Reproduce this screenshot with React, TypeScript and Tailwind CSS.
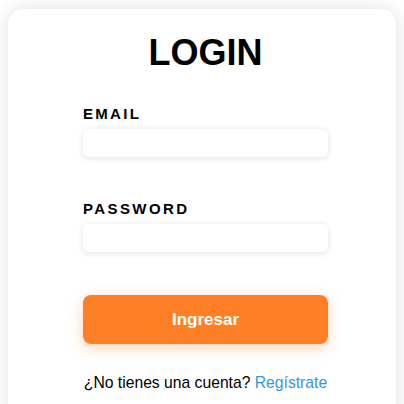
export default function App() {
  return (
    <div className="min-h-screen bg-white pt-[9px] px-2 font-['Liberation_Sans',Arial,sans-serif]">
      <div className="bg-white rounded-[15px] shadow-[0_0_20px_rgba(0,0,0,0.12)] pt-[26px] pb-10 pl-[75px]">
        <div className="w-[245px] flex flex-col">
          <h1 className="text-[36px] leading-none font-bold text-black text-center">LOGIN</h1>

          <label className="mt-[35px] text-[15px] leading-none font-bold tracking-[2.3px] text-black">EMAIL</label>
          <input
            type="email"
            className="mt-2 h-[28px] rounded-md bg-white shadow-[0_1px_6px_rgba(0,0,0,0.12)] outline-none px-2 text-sm"
          />

          <label className="mt-[44px] text-[15px] leading-none font-bold tracking-[2.4px] text-black">PASSWORD</label>
          <input
            type="password"
            className="mt-2 h-[28px] rounded-md bg-white shadow-[0_1px_6px_rgba(0,0,0,0.12)] outline-none px-2 text-sm"
          />

          <button className="mt-[43px] h-[49px] rounded-lg bg-[#ff7f27] text-white text-[17px] font-bold shadow-[0_4px_14px_rgba(255,127,39,0.35)]">
            Ingresar
          </button>

          <p className="mt-[31px] text-[15.7px] leading-none text-black text-center whitespace-nowrap">
            ¿No tienes una cuenta? <a href="#" className="text-[#3498db]">Regístrate</a>
          </p>
        </div>
      </div>
    </div>
  )
}
